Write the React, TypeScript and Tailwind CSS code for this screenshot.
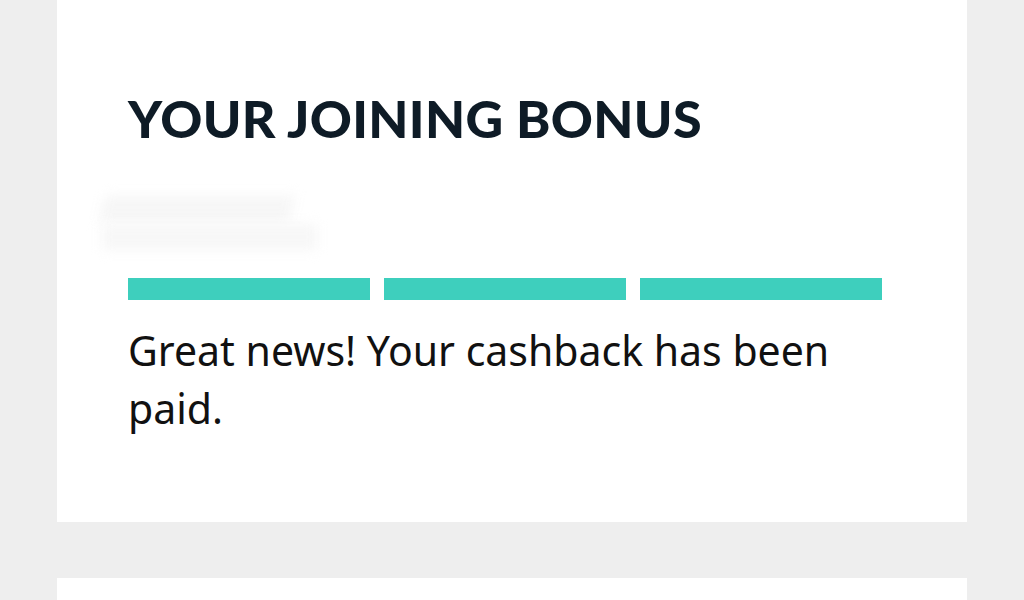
export default function App() {
  const steps = [true, true, true];

  return (
    <div className="h-[600px] bg-[#eeeeee] overflow-hidden">
      <div className="ml-[57px] w-[910px] bg-white pl-[71px] pr-[85px] pt-[86px] h-[522px]">
        <h1
          className="text-[52px] leading-[64px] font-black text-[#0e1b26] tracking-[0.3px]"
          style={{ fontFamily: "Lato, 'Liberation Sans', sans-serif" }}
        >
          YOUR JOINING BONUS
        </h1>

        {/* blurred placeholder under the heading */}
        <div className="flex flex-col gap-[2px] h-[126px] pt-[46px] -ml-[26px]">
          <div className="w-[190px] h-[26px] bg-[#f6f6f6] blur-[6px] -skew-x-12" />
          <div className="w-[215px] h-[26px] bg-[#f7f7f7] blur-[6px]" />
        </div>

        <div className="flex gap-[14px] mt-[2px]">
          {steps.map((done, i) => (
            <div
              key={i}
              className={`h-[22px] flex-1 ${done ? "bg-[#3ecfbd]" : "bg-[#e5e5e5]"}`}
            />
          ))}
        </div>

        <p
          className="mt-[21px] text-[41px] leading-[58px] text-[#111111]"
          style={{ fontFamily: "'Noto Sans', 'Open Sans', sans-serif" }}
        >
          Great news! Your cashback has been paid.
        </p>
      </div>

      <div className="ml-[57px] w-[910px] bg-white mt-[56px] h-[200px]" />
    </div>
  );
}
